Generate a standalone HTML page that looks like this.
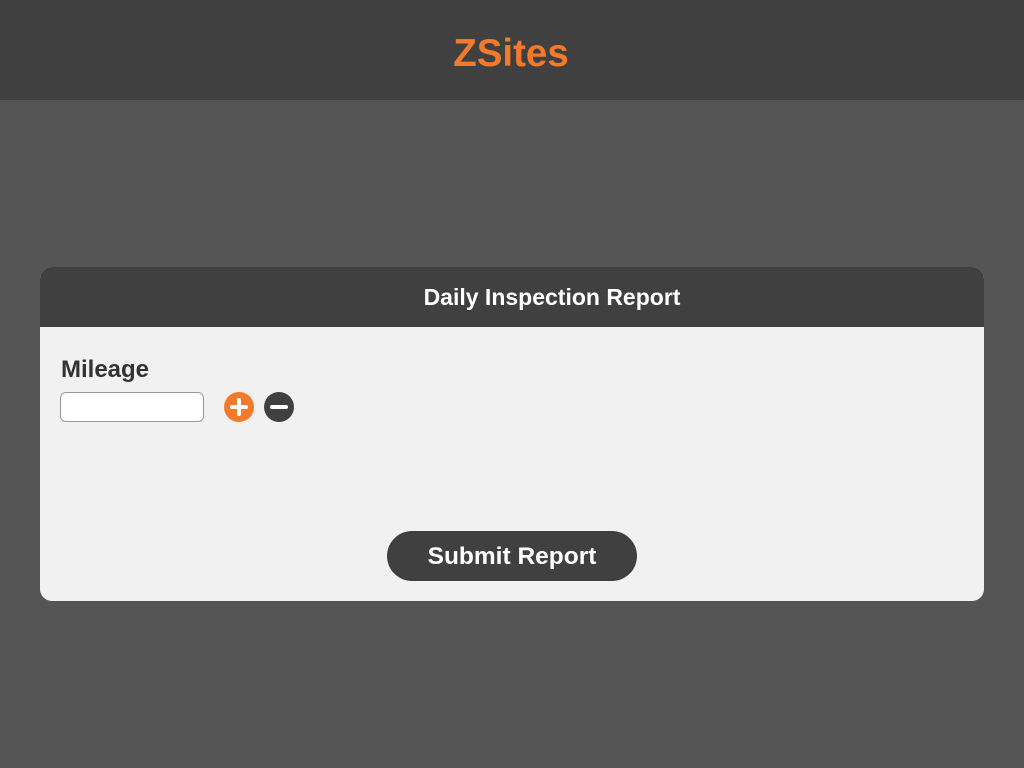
<!DOCTYPE html>
<html><head><style>
body{margin:0;width:1024px;height:768px;background:#555;font-family:"Liberation Sans",sans-serif;position:relative;overflow:hidden}
.top{position:absolute;left:0;top:0;width:1024px;height:100px;background:#404040;text-align:center}
.top span{display:inline-block;margin-top:34px;margin-left:-2px;color:#f47a2b;font-weight:bold;font-size:38.5px;line-height:40px}
.card{position:absolute;left:40px;top:267px;width:944px;height:334px;background:#f1f1f1;border-radius:12px;overflow:hidden}
.hd{height:60px;background:#404040;color:#fff;font-weight:bold;font-size:23px;text-align:center;line-height:60px;padding-left:80px;box-sizing:border-box}
.lbl{position:absolute;left:21px;top:89px;font-size:24px;font-weight:bold;color:#333}
.inp{position:absolute;left:20px;top:125px;width:142px;height:28px;background:#fff;border:1px solid #999;border-radius:6px}
.c{position:absolute;top:125px;width:30px;height:30px;border-radius:50%}
.btn{position:absolute;left:347px;top:264px;width:250px;height:50px;border-radius:25px;background:#404040;color:#fff;font-weight:bold;font-size:24.5px;text-align:center;line-height:52px}
</style></head><body>
<div class="top"><span>ZSites</span></div>
<div class="card">
<div class="hd">Daily Inspection Report</div>
<div class="lbl">Mileage</div>
<div class="inp"></div>
<div class="c" style="left:184px;background:#f47a2b"><svg width="30" height="30"><path d="M15 8v14M8 15h14" stroke="#fff" stroke-width="4" stroke-linecap="round"/></svg></div>
<div class="c" style="left:224px;background:#404040"><svg width="30" height="30"><path d="M8 15h14" stroke="#fff" stroke-width="4" stroke-linecap="round"/></svg></div>
<div class="btn">Submit Report</div>
</div>
</body></html>
